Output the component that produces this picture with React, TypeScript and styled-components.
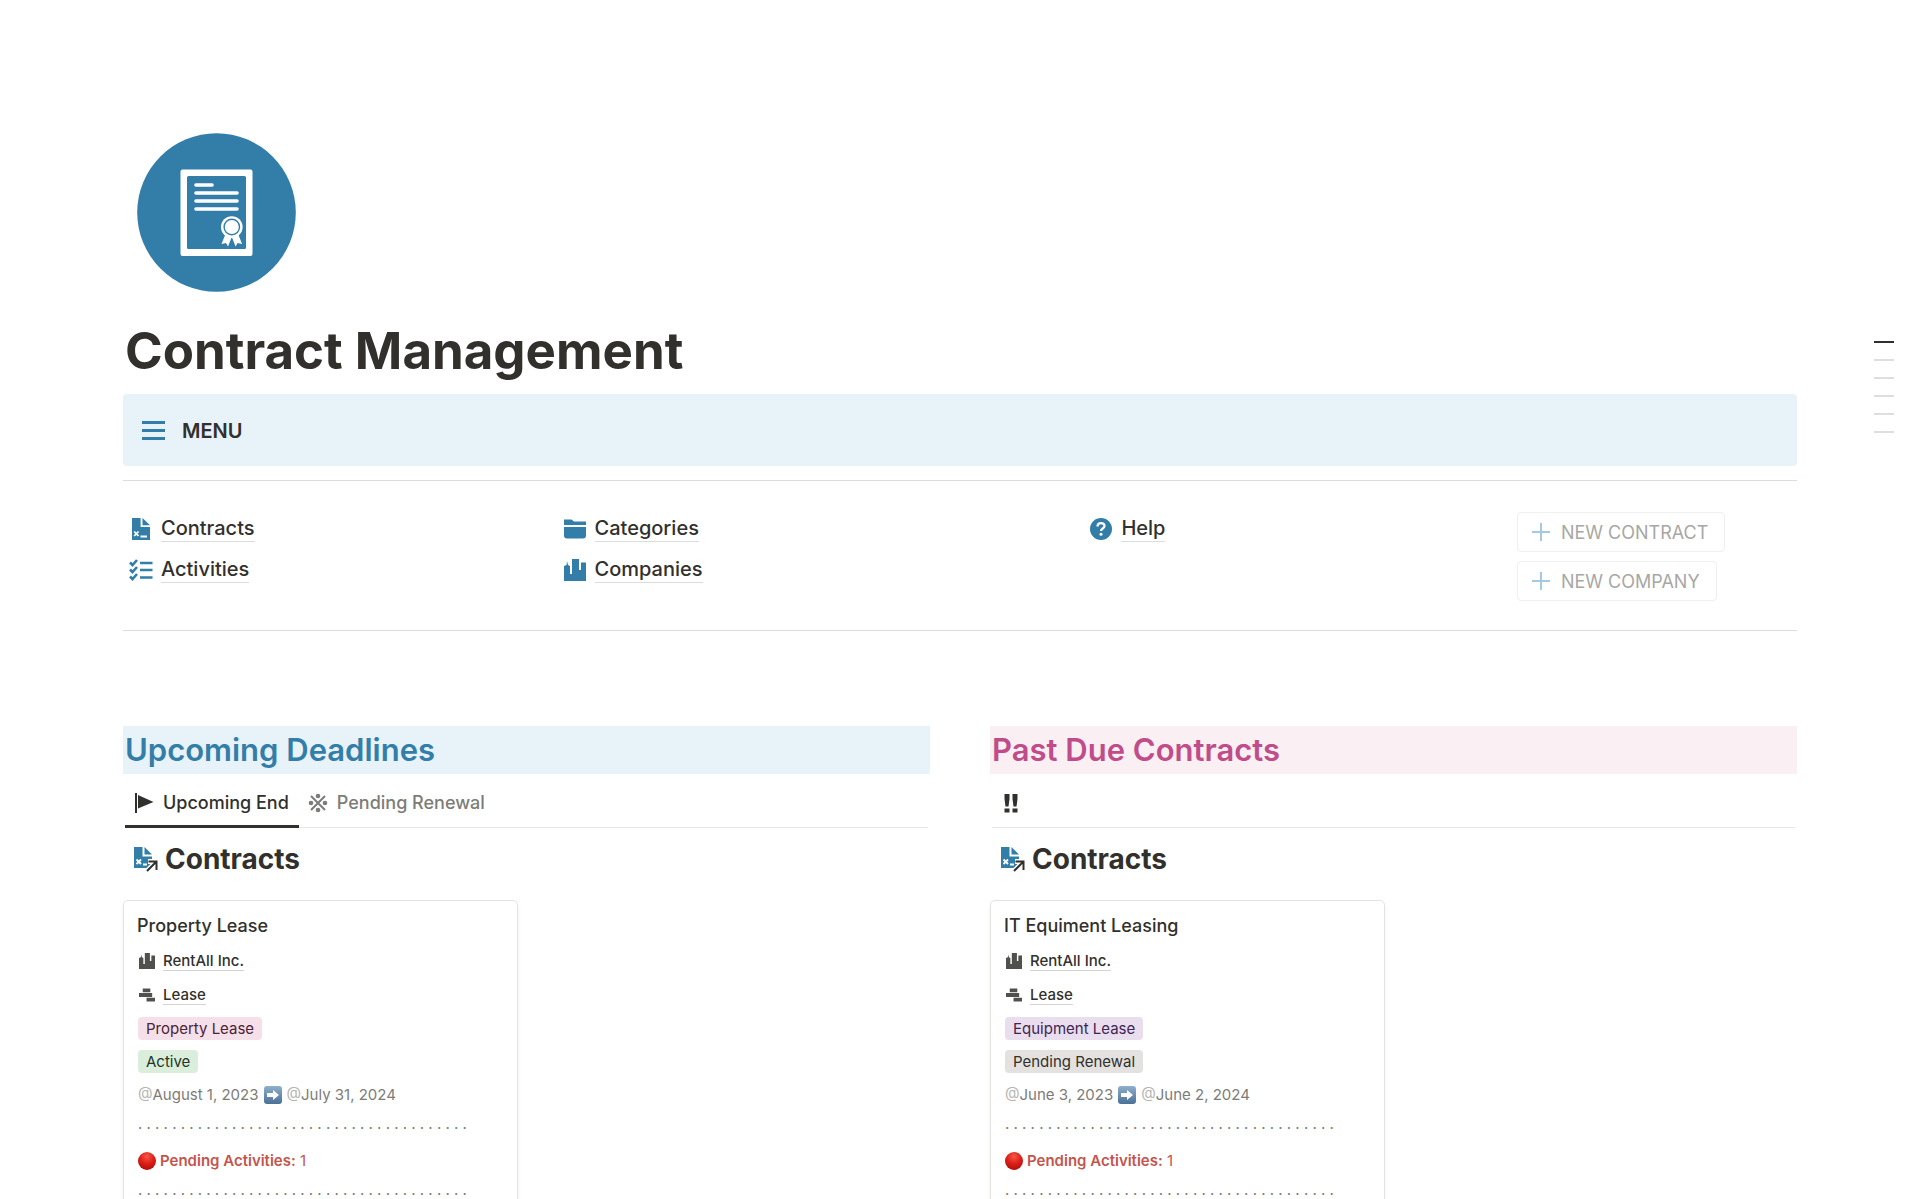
import React from "react";
import styled, { createGlobalStyle } from "styled-components";

const BLUE = "#337ea9";
const INK = "#32302c";

const Global = createGlobalStyle`
  *, *::before, *::after { box-sizing: border-box; }
  body {
    margin: 0;
    background: #fff;
    color: ${INK};
    font-family: Inter, "Noto Sans", sans-serif;
    overflow-x: hidden;
  }
  h1, h2, h3, p { margin: 0; padding: 0; }
  button { font: inherit; background: none; border: 0; padding: 0; color: inherit; }
  svg { display: block; flex: none; }
`;

const Page = styled.div`
  display: grid;
  grid-template-columns: 123px minmax(0, 1fr) 123px;
`;

const Main = styled.main`
  grid-column: 2;
  padding-top: 133px;
`;

const Outline = styled.nav`
  display: flex;
  flex-direction: column;
  align-items: flex-end;
  gap: 16px;
  padding: 341px 26px 0 0;
`;

const OutlineMark = styled.a<{ $active?: boolean }>`
  width: 20px;
  height: 2px;
  background: ${(p) => (p.$active ? INK : "#dededd")};
`;

const CoverIcon = styled.div`
  padding-left: 14px;
`;

const Title = styled.h1`
  margin-top: 27px;
  padding-left: 2px;
  font-size: 51px;
  line-height: 64px;
  font-weight: 700;
`;

const Callout = styled.section`
  display: flex;
  align-items: center;
  gap: 16px;
  margin-top: 11px;
  padding: 21px 18px 19px;
  border-radius: 4px;
  background: #e7f2f9;
  font-size: 20px;
  line-height: 32px;
  font-weight: 600;
`;

const Rule = styled.hr`
  margin: 14px 0 0;
  border: 0;
  border-top: 1px solid #dcdcdb;
`;

const MenuGrid = styled.nav`
  display: grid;
  grid-template-columns: 1fr 1.25fr 1fr 0.75fr;
  column-gap: 60px;
  margin-top: 31px;
  padding-bottom: 15px;
`;

const LinkColumn = styled.div`
  display: flex;
  flex-direction: column;
  align-items: flex-start;
  gap: 14px;
  padding: 3px 0 0 6px;
`;

const ActionColumn = styled.div`
  display: flex;
  flex-direction: column;
  align-items: flex-start;
  gap: 9px;
`;

const MenuLink = styled.a`
  display: grid;
  grid-template-columns: 24px auto;
  align-items: center;
  justify-items: center;
  column-gap: 8px;
  color: ${INK};
  text-decoration: none;
  font-size: 20px;
  line-height: 26px;
  font-weight: 500;
`;

const Underlined = styled.span`
  border-bottom: 1px solid #dddcda;
`;

const ActionButton = styled.button`
  display: flex;
  align-items: center;
  gap: 10px;
  height: 40px;
  padding: 0 16px 0 13px;
  border: 1px solid #efefee;
  border-radius: 4px;
  color: #a8a7a5;
  font-size: 18px;
`;

const Sections = styled.div`
  display: grid;
  grid-template-columns: 1fr 1fr;
  column-gap: 60px;
  margin-top: 95px;
`;

const SectionHeading = styled.h2<{ $tone: "blue" | "pink" }>`
  padding: 0 2px;
  font-size: 31px;
  line-height: 48px;
  font-weight: 600;
  color: ${(p) => (p.$tone === "blue" ? BLUE : "#c14c8a")};
  background: ${(p) => (p.$tone === "blue" ? "#e7f2f9" : "#faf0f4")};
`;

const Tabs = styled.div`
  display: flex;
  height: 54px;
  margin: 0 2px;
  border-bottom: 1px solid #e6e6e5;
`;

const Tab = styled.button<{ $active?: boolean }>`
  display: flex;
  align-items: center;
  gap: 9px;
  height: 54px;
  padding: 6px 10px 0 9px;
  border-bottom: 3px solid ${(p) => (p.$active ? INK : "transparent")};
  font-size: 18px;
  line-height: 24px;
  font-weight: 500;
  color: ${(p) => (p.$active ? INK : "#7d7c78")};
`;

const DatabaseTitle = styled.h3`
  display: flex;
  align-items: center;
  gap: 7px;
  margin-top: 11px;
  padding-left: 10px;
  font-size: 28px;
  line-height: 40px;
  font-weight: 700;
`;

const Card = styled.article`
  width: 395px;
  max-width: 100%;
  margin-top: 21px;
  padding: 8px 13px;
  border: 1px solid #e3e3e2;
  border-radius: 5px;
  box-shadow: 0 2px 4px rgba(15, 15, 15, 0.06);
`;

const CardTitle = styled.p`
  margin-bottom: 1px;
  font-size: 18px;
  line-height: 34px;
  font-weight: 500;
`;

const Line = styled.div`
  display: flex;
  align-items: center;
  height: 33px;
  padding-left: 1px;
  font-size: 15px;
  line-height: 20px;
  white-space: pre;
  color: #7d7c78;
`;

const DateLine = styled(Line)`
  gap: 5px;
`;

const RelationLine = styled(Line)`
  gap: 8px;
  height: 34px;
  padding-left: 2px;
  color: ${INK};
  font-weight: 500;
`;

const Relation = styled.a`
  border-bottom: 1px solid #d5d4d2;
  line-height: 18px;
  color: inherit;
  text-decoration: none;
`;

const tagColors = {
  pink: ["#f5e0e9", "#4c2337"],
  green: ["#dbeddb", "#1c3829"],
  purple: ["#e8deee", "#412454"],
  gray: ["#e3e2e0", "#32302c"],
};
type TagTone = keyof typeof tagColors;

const Tag = styled.span<{ $tone: TagTone }>`
  padding: 0 8px;
  border-radius: 4px;
  line-height: 23px;
  background: ${(p) => tagColors[p.$tone][0]};
  color: ${(p) => tagColors[p.$tone][1]};
`;

const At = styled.span`
  color: #b5b4b1;
`;

const Pending = styled(Line)`
  gap: 4px;
  color: #c4554d;
`;

const PendingLabel = styled.b`
  font-weight: 600;
`;

const ContractIcon = () => (
  <svg width="22" height="22" viewBox="0 0 22 22" fill={BLUE} aria-hidden="true">
    <path d="M2 0h8.600v9H20v13H2z" />
    <path d="M12.500 0L20 7.300h-7.500z" />
    <path d="M4.200 13.500l4.300 4.500m0-4.500l-4.300 4.500M10.500 18.500h6.500" stroke="#fff" strokeWidth="1.800" fill="none" />
  </svg>
);

const LinkedContractIcon = () => (
  <svg width="25" height="25" viewBox="0 0 25 25" aria-hidden="true">
    <g fill={BLUE}>
      <path d="M1 0h8.500v9.500H19V21H1z" />
      <path d="M11.500 0L19 7.500h-7.500z" />
    </g>
    <path d="M3.500 12.500l4.500 4.500m0-4.500l-4.500 4.500M10 17.500h4" stroke="#fff" strokeWidth="1.800" fill="none" />
    <path d="M13 25l9-9M15 14.500h8V23" stroke="#fff" strokeWidth="5" fill="none" />
    <path d="M14 24l9-9M15.500 14.500h8V23" stroke={INK} strokeWidth="2" fill="none" />
  </svg>
);

const ChecklistIcon = () => (
  <svg width="24" height="22" viewBox="0 0 24 22" fill="none" stroke={BLUE} strokeWidth="2.600" aria-hidden="true">
    <path d="M1 3.500L3.500 6 8 1M1 10.500L3.500 13 8 8M1 17.500L3.500 20 8 15M11 4h12.500M11 11h12.500M11 18.500h12.500" />
  </svg>
);

const FolderIcon = () => (
  <svg width="22" height="22" viewBox="0 0 22 22" fill={BLUE} aria-hidden="true">
    <path d="M0 1.500h7.500l2.500 2h12V7H0zM0 9h22v8.500a3 3 0 0 1-3 3H3a3 3 0 0 1-3-3z" />
  </svg>
);

const CityIcon = ({ size = 22, color = BLUE }: { size?: number; color?: string }) => (
  <svg width={size} height={size} viewBox="0 0 22 22" fill={color} aria-hidden="true">
    <path d="M0 22V7l2.500-1L3 2l1 4 2 1v8h2V0h7v11h2V3.500h5V22z" />
  </svg>
);

const HelpIcon = () => (
  <svg width="22" height="22" viewBox="0 0 22 22" aria-hidden="true">
    <circle cx="11" cy="11" r="11" fill={BLUE} />
    <path d="M7.500 8.500c0-4.500 7-4.500 7-.500 0 2.500-3.500 2.500-3.500 5" fill="none" stroke="#fff" strokeWidth="2.300" />
    <circle cx="11" cy="16.300" r="1.500" fill="#fff" />
  </svg>
);

const PlusIcon = () => (
  <svg width="20" height="20" viewBox="0 0 20 20" stroke="#a5c9de" strokeWidth="2" aria-hidden="true">
    <path d="M1 10h18M10 1v18" />
  </svg>
);

const BarsIcon = () => (
  <svg width="25" height="22" viewBox="0 0 25 22" stroke={BLUE} strokeWidth="3" aria-hidden="true">
    <path d="M1 2.500h23M1 10.500h23M1 18.500h23" />
  </svg>
);

const FlagIcon = () => (
  <svg width="20" height="20" viewBox="0 0 20 20" fill={INK} aria-hidden="true">
    <path d="M1 0h2v20H1zM4 2l15.500 7L4 15.500z" />
  </svg>
);

const RenewIcon = () => (
  <svg width="20" height="20" viewBox="0 0 20 20" fill="#7d7c78" stroke="#7d7c78" aria-hidden="true">
    <path d="M3 3l14 14M17 3L3 17" strokeWidth="2" />
    <g stroke="none">
      <circle cx="10" cy="3" r="2.300" />
      <circle cx="10" cy="17" r="2.300" />
      <circle cx="3" cy="10" r="2.300" />
      <circle cx="17" cy="10" r="2.300" />
    </g>
  </svg>
);

const AlertIcon = () => (
  <svg width="20" height="20" viewBox="0 0 20 20" fill={INK} aria-hidden="true">
    <path d="M3.500 1h5v5l-1 7.500h-3L3.500 6zM11.500 1h5v5l-1 7.500h-3L11.500 6zM3.500 15.500h5v4h-5zM11.500 15.500h5v4h-5z" />
  </svg>
);

const BricksIcon = () => (
  <svg width="16" height="16" viewBox="0 0 17 16" fill="#50504d" aria-hidden="true">
    <path d="M4 1h8v4H4zM0 6h14v4H0zM8 11h9v4H8z" />
  </svg>
);

const ArrowBadge = () => (
  <svg width="18" height="18" viewBox="0 0 18 18" role="img" aria-label="to">
    <defs>
      <linearGradient id="badge" x1="0" y1="0" x2="0" y2="1">
        <stop offset="0" stopColor="#8fb0cb" />
        <stop offset="1" stopColor="#4a7096" />
      </linearGradient>
    </defs>
    <rect width="18" height="18" rx="3" fill="url(#badge)" />
    <path d="M3 7h6V4l6 5-6 5v-3H3z" fill="#fff" />
  </svg>
);

const RedDot = () => (
  <svg width="18" height="18" viewBox="0 0 18 18" aria-hidden="true">
    <defs>
      <radialGradient id="dot" cx="0.5" cy="0.25" r="0.8">
        <stop offset="0" stopColor="#f4584a" />
        <stop offset="0.5" stopColor="#de1f17" />
        <stop offset="1" stopColor="#a90d0d" />
      </radialGradient>
    </defs>
    <circle cx="9" cy="9" r="9" fill="url(#dot)" />
  </svg>
);

const CertificateLogo = () => (
  <svg width="159" height="159" viewBox="0 0 159 159" aria-hidden="true">
    <circle cx="79.500" cy="79.500" r="79.300" fill={BLUE} />
    <path fillRule="evenodd" d="M45.500 36.500h68a2 2 0 0 1 2 2v82.500a2 2 0 0 1-2 2h-68a2 2 0 0 1-2-2V38.500a2 2 0 0 1 2-2zM51.500 43a1.500 1.500 0 0 0-1.500 1.500v70a1.500 1.500 0 0 0 1.500 1.500h56a1.500 1.500 0 0 0 1.500-1.500v-70a1.500 1.500 0 0 0-1.500-1.500z" fill="#fff" />
    <path d="M59 52h16M59 60h41M59 68h41M59 76h41" stroke="#fff" strokeWidth="3.600" strokeLinecap="round" />
    <path d="M88.500 101l-4 10 4.500-1 2 3.500L94.800 104l3.800 9.500 2-3.500 4.500 1-4-10z" fill="#fff" />
    <circle cx="94.800" cy="94" r="10.800" fill="#fff" />
    <circle cx="94.800" cy="94" r="7.700" fill="none" stroke={BLUE} strokeWidth="1.400" />
  </svg>
);

const DOTS = Array(39).fill("·").join(" ");

interface ContractCardProps {
  title: string;
  category: string;
  categoryTone: TagTone;
  status: string;
  statusTone: TagTone;
  start: string;
  end: string;
}

const ContractCard = (c: ContractCardProps) => (
  <Card>
    <CardTitle>{c.title}</CardTitle>
    <RelationLine>
      <CityIcon size={16} color="#50504d" />
      <Relation href="#company">RentAll Inc.</Relation>
    </RelationLine>
    <RelationLine>
      <BricksIcon />
      <Relation href="#category">Lease</Relation>
    </RelationLine>
    <Line><Tag $tone={c.categoryTone}>{c.category}</Tag></Line>
    <Line><Tag $tone={c.statusTone}>{c.status}</Tag></Line>
    <DateLine>
      <span><At>@</At>{c.start}</span>
      <ArrowBadge />
      <span><At>@</At>{c.end}</span>
    </DateLine>
    <Line>{DOTS}</Line>
    <Pending>
      <RedDot />
      <span><PendingLabel>Pending Activities:</PendingLabel> 1</span>
    </Pending>
    <Line>{DOTS}</Line>
  </Card>
);

export default function App() {
  return (
    <>
      <Global />
      <Page>
        <Main>
          <CoverIcon><CertificateLogo /></CoverIcon>
          <Title>Contract Management</Title>
          <Callout><BarsIcon />MENU</Callout>
          <Rule />
          <MenuGrid>
            <LinkColumn>
              <MenuLink href="#contracts"><ContractIcon /><Underlined>Contracts</Underlined></MenuLink>
              <MenuLink href="#activities"><ChecklistIcon /><Underlined>Activities</Underlined></MenuLink>
            </LinkColumn>
            <LinkColumn>
              <MenuLink href="#categories"><FolderIcon /><Underlined>Categories</Underlined></MenuLink>
              <MenuLink href="#companies"><CityIcon /><Underlined>Companies</Underlined></MenuLink>
            </LinkColumn>
            <LinkColumn>
              <MenuLink href="#help"><HelpIcon /><Underlined>Help</Underlined></MenuLink>
            </LinkColumn>
            <ActionColumn>
              <ActionButton type="button"><PlusIcon />NEW CONTRACT</ActionButton>
              <ActionButton type="button"><PlusIcon />NEW COMPANY</ActionButton>
            </ActionColumn>
          </MenuGrid>
          <Rule />
          <Sections>
            <section>
              <SectionHeading $tone="blue">Upcoming Deadlines</SectionHeading>
              <Tabs>
                <Tab type="button" $active><FlagIcon />Upcoming End</Tab>
                <Tab type="button"><RenewIcon />Pending Renewal</Tab>
              </Tabs>
              <DatabaseTitle><LinkedContractIcon />Contracts</DatabaseTitle>
              <ContractCard title="Property Lease" category="Property Lease" categoryTone="pink" status="Active" statusTone="green" start="August 1, 2023" end="July 31, 2024" />
            </section>
            <section>
              <SectionHeading $tone="pink">Past Due Contracts</SectionHeading>
              <Tabs>
                <Tab type="button" aria-label="Past due"><AlertIcon /></Tab>
              </Tabs>
              <DatabaseTitle><LinkedContractIcon />Contracts</DatabaseTitle>
              <ContractCard title="IT Equiment Leasing" category="Equipment Lease" categoryTone="purple" status="Pending Renewal" statusTone="gray" start="June 3, 2023" end="June 2, 2024" />
            </section>
          </Sections>
        </Main>
        <Outline aria-label="Outline">
          {[0, 1, 2, 3, 4, 5].map((i) => <OutlineMark key={i} href="#top" $active={i === 0} />)}
        </Outline>
      </Page>
    </>
  );
}
